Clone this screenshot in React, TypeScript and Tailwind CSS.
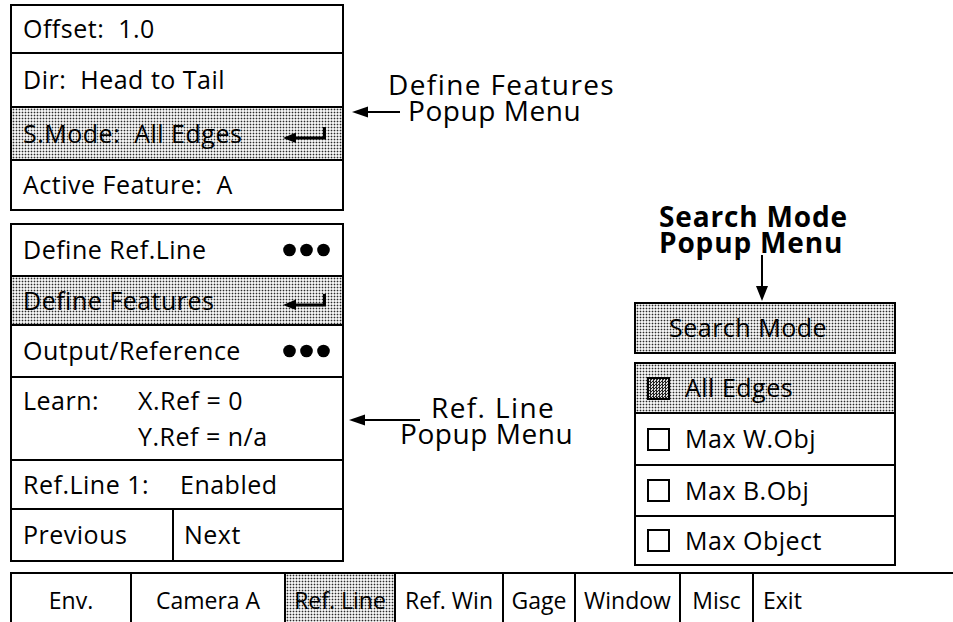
import React from 'react';

const dither =
  'bg-[#f2f2f2] bg-[radial-gradient(#2a2a2a_0.75px,transparent_1.1px)] bg-[length:3px_3px]';

function Dots() {
  return (
    <svg width="47" height="14" viewBox="0 0 47 14">
      <circle cx="6.5" cy="7" r="6.3" fill="#000" />
      <circle cx="23.5" cy="7" r="6.3" fill="#000" />
      <circle cx="40.5" cy="7" r="6.3" fill="#000" />
    </svg>
  );
}

function ReturnArrow() {
  return (
    <svg width="44" height="18" viewBox="0 0 44 18" className="mr-[3px]">
      <path d="M8 13 H41.5 V2" stroke="#000" strokeWidth="3" fill="none" />
      <polygon points="0,13 13,7.5 13,18" fill="#000" />
    </svg>
  );
}

function LeftArrow({ width }: { width: number }) {
  return (
    <svg width={width} height="12" viewBox={`0 0 ${width} 12`}>
      <line x1="10" y1="6" x2={width} y2="6" stroke="#000" strokeWidth="2" />
      <polygon points="0,6 16,0.5 16,11.5" fill="#000" />
    </svg>
  );
}

function DownArrow() {
  return (
    <svg width="14" height="46" viewBox="0 0 14 46">
      <line x1="7" y1="0" x2="7" y2="34" stroke="#000" strokeWidth="2" />
      <polygon points="7,46 1,31 13,31" fill="#000" />
    </svg>
  );
}

function Checkbox({ checked }: { checked?: boolean }) {
  return (
    <div
      className={
        'w-[23px] h-[23px] border-2 border-black shrink-0 ' +
        (checked
          ? 'bg-[repeating-conic-gradient(#222_0_25%,#ddd_0_50%)] bg-[length:3px_3px]'
          : 'bg-white')
      }
    />
  );
}

function Row({
  h,
  last,
  grey,
  children,
}: {
  h: string;
  last?: boolean;
  grey?: boolean;
  children: React.ReactNode;
}) {
  return (
    <div
      className={
        'flex items-center pl-[11px] pr-[12px] ' +
        h +
        (last ? '' : ' border-b-2 border-black') +
        (grey ? ' ' + dither : '')
      }
    >
      {children}
    </div>
  );
}

const tabs = [
  { label: 'Env.', w: 'w-[120px]', align: 'justify-center' },
  { label: 'Camera A', w: 'w-[154px]', align: 'justify-center' },
  { label: 'Ref. Line', w: 'w-[110px]', align: 'justify-center', grey: true },
  { label: 'Ref. Win', w: 'w-[108px]', align: 'justify-center' },
  { label: 'Gage', w: 'w-[72px]', align: 'justify-center' },
  { label: 'Window', w: 'w-[105px]', align: 'justify-center' },
  { label: 'Misc', w: 'w-[73px]', align: 'justify-center' },
  { label: 'Exit', w: 'flex-1', align: 'justify-start pl-[9px]' },
];

export default function App() {
  return (
    <div className="w-[953px] h-[622px] overflow-hidden bg-white text-black [font-family:'Open_Sans',sans-serif] text-[25px] tracking-[0.02em]">
      <div className="flex h-[572px]">
        {/* Left menus */}
        <div className="ml-[10px] w-[334px] pt-[4px] flex flex-col gap-[12px]">
          <div className="border-2 border-black flex flex-col">
            <Row h="h-[48px]">Offset:&nbsp; 1.0</Row>
            <Row h="h-[54px]">Dir:&nbsp; Head to Tail</Row>
            <Row h="h-[53px]" grey>
              <span className="flex-1">S.Mode:&nbsp; All Edges</span>
              <ReturnArrow />
            </Row>
            <Row h="h-[48px]" last>
              Active Feature:&nbsp; A
            </Row>
          </div>

          <div className="border-2 border-black flex flex-col">
            <Row h="h-[52px]">
              <span className="flex-1">Define Ref.Line</span>
              <Dots />
            </Row>
            <Row h="h-[49px]" grey>
              <span className="flex-1">Define Features</span>
              <ReturnArrow />
            </Row>
            <Row h="h-[52px]">
              <span className="flex-1">Output/Reference</span>
              <Dots />
            </Row>
            <div className="h-[83px] border-b-2 border-black flex pl-[11px] pt-[4px] leading-[36px]">
              <div className="w-[115px]">Learn:</div>
              <div className="flex flex-col">
                <span>X.Ref = 0</span>
                <span>Y.Ref = n/a</span>
              </div>
            </div>
            <Row h="h-[49px]">
              <span className="w-[157px]">Ref.Line 1:</span>
              <span>Enabled</span>
            </Row>
            <div className="h-[50px] flex">
              <div className="w-[162px] border-r-2 border-black flex items-center pl-[11px]">
                Previous
              </div>
              <div className="flex-1 flex items-center pl-[10px]">Next</div>
            </div>
          </div>
        </div>

        {/* Annotations */}
        <div className="w-[290px] flex flex-col text-[28px] leading-[26px] tracking-[0.05em]">
          <div className="mt-[71px] ml-[44px] whitespace-nowrap">Define Features</div>
          <div className="flex items-start h-[26px]">
            <div className="ml-[8px] mt-[9px]">
              <LeftArrow width={48} />
            </div>
            <div className="ml-[8px] whitespace-nowrap tracking-[0.02em]">Popup Menu</div>
          </div>

          <div className="mt-[271px] flex items-start h-[26px]">
            <div className="ml-[5px] mt-[20px]">
              <LeftArrow width={71} />
            </div>
            <div className="ml-[11px] whitespace-nowrap">Ref. Line</div>
          </div>
          <div className="ml-[56px] whitespace-nowrap tracking-[0.02em]">Popup Menu</div>
        </div>

        {/* Search Mode menu */}
        <div className="w-[262px] flex flex-col">
          <div className="mt-[203px] pl-[25px] text-[28px] leading-[26px] font-bold tracking-[0.03em] whitespace-nowrap">
            <div>Search Mode</div>
            <div>Popup Menu</div>
          </div>
          <div className="ml-[121px] h-[47px]">
            <DownArrow />
          </div>
          <div className={'h-[52px] border-2 border-black flex items-center pl-[33px] ' + dither}>
            Search Mode
          </div>
          <div className="mt-[8px] border-2 border-black flex flex-col">
            {[
              { label: 'All Edges', h: 'h-[50px]', checked: true },
              { label: 'Max W.Obj', h: 'h-[52px]' },
              { label: 'Max B.Obj', h: 'h-[51px]' },
              { label: 'Max Object', h: 'h-[47px]', last: true },
            ].map((item) => (
              <div
                key={item.label}
                className={
                  'flex items-center gap-[15px] pl-[11px] ' +
                  item.h +
                  (item.last ? '' : ' border-b-2 border-black') +
                  (item.checked ? ' ' + dither : '')
                }
              >
                <Checkbox checked={item.checked} />
                <span>{item.label}</span>
              </div>
            ))}
          </div>
        </div>
      </div>

      {/* Bottom tab bar */}
      <div className="ml-[10px] flex border-t-2 border-black h-[56px] text-[23px] tracking-normal">
        {tabs.map((t) => (
          <div
            key={t.label}
            className={
              'border-l-2 border-black flex items-start pt-[9px] leading-[34px] ' +
              t.w +
              ' ' +
              t.align +
              (t.grey ? ' ' + dither : '')
            }
          >
            {t.label}
          </div>
        ))}
      </div>
    </div>
  );
}
